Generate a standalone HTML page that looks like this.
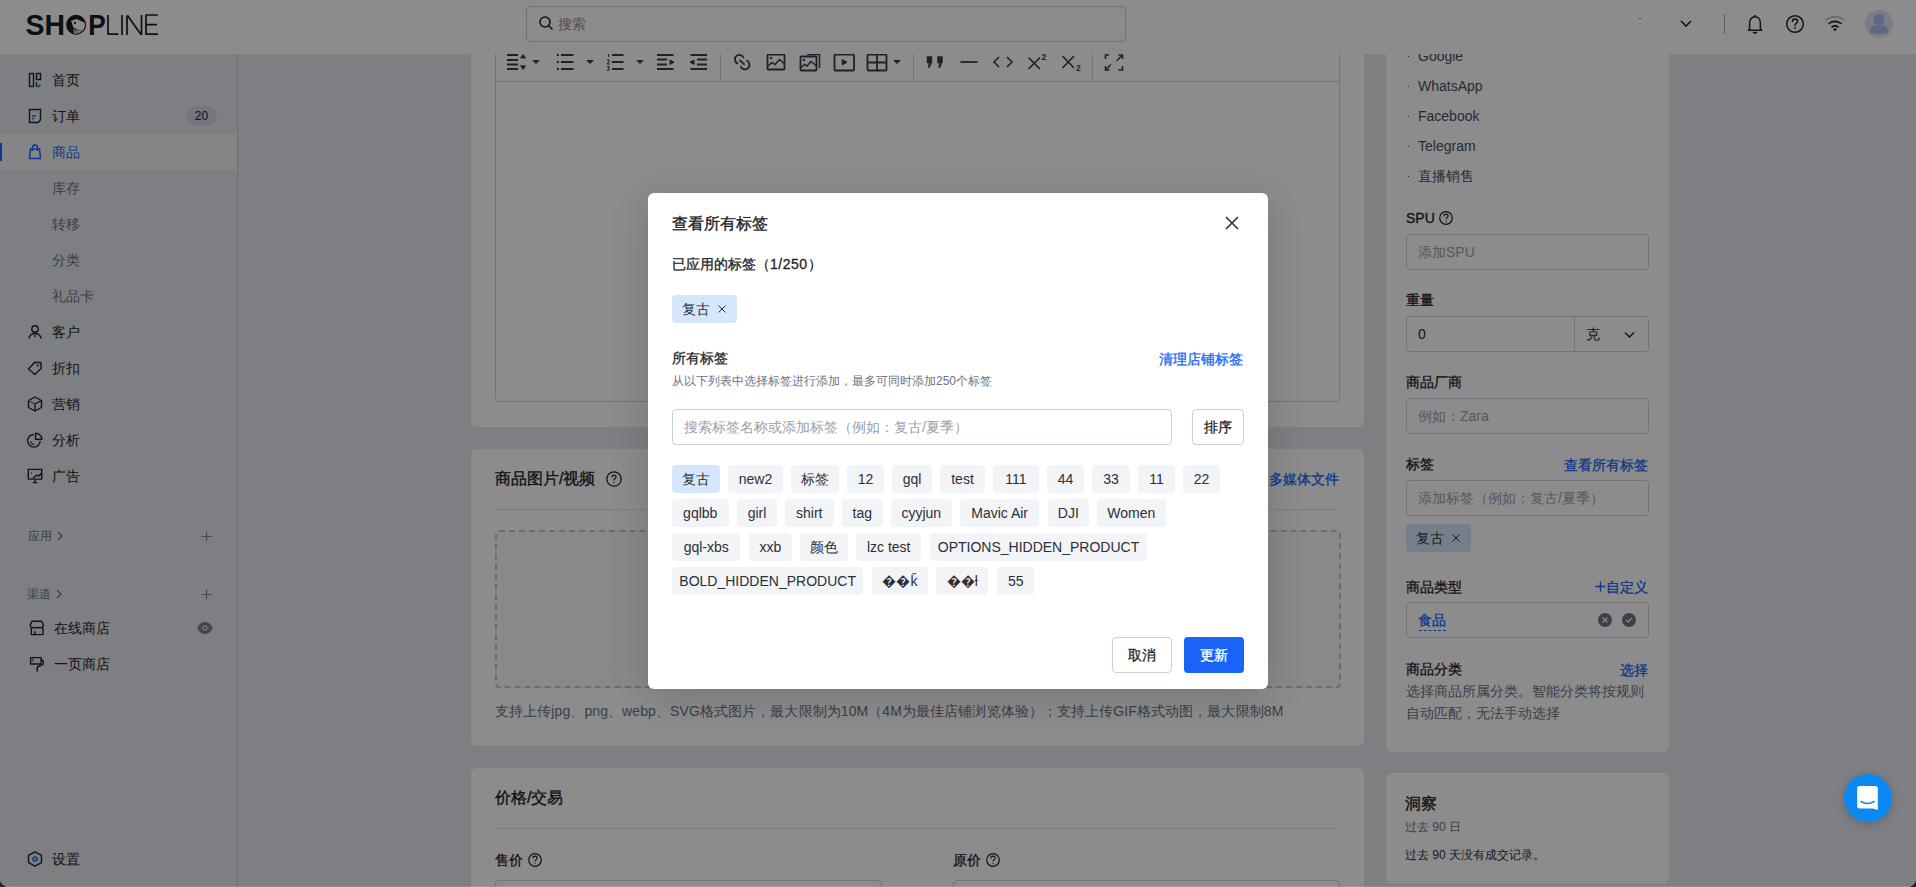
<!DOCTYPE html>
<html><head><meta charset="utf-8">
<style>
*{box-sizing:border-box;margin:0;padding:0}
html,body{width:1916px;height:887px;overflow:hidden}
body{font-family:"Liberation Sans",sans-serif;font-size:14px;color:#1f2329;background:#e6e8ee;position:relative}
.a{position:absolute;white-space:nowrap}
.t{position:absolute;white-space:nowrap;line-height:20px}
svg{position:absolute;overflow:visible}
#header{left:0;top:0;width:1916px;height:54px;background:#fff;z-index:5}
#side{left:0;top:54px;width:238px;height:833px;border-right:1px solid #c2c8d8}
.card{position:absolute;background:#fff;border-radius:6px}
.inp{position:absolute;border:1px solid #cfd3dc;border-radius:4px;background:#fff}
.ph{color:#9aa1ad}
.lbl{-webkit-text-stroke-width:0.3px}
.m{-webkit-text-stroke-width:0.3px}
.link{color:#1964f7;-webkit-text-stroke-width:0.3px}
#overlay{z-index:10;position:absolute;left:0;top:0;width:1916px;height:887px;background:rgba(0,0,0,0.45)}
#modal{z-index:11;position:absolute;left:648px;top:193px;width:620px;height:496px;background:#fff;border-radius:6px;box-shadow:0 8px 40px rgba(0,0,0,0.16)}
.chip{position:absolute;height:28px;line-height:28px;background:#f3f4f7;border-radius:4px;text-align:center;color:#2b2f36;font-size:14px}
.sel{background:#d6e7fd}
</style></head><body>

<!-- ============ HEADER ============ -->
<div id="header" class="a">
  <!-- logo -->
  <svg style="left:0;top:0" width="200" height="54">
    <text x="25.6" y="35" font-family="Liberation Sans" font-weight="bold" font-size="29.6" fill="#1a1d21" textLength="39.5" lengthAdjust="spacingAndGlyphs">SH</text>
    <defs><clipPath id="oc"><circle cx="76.1" cy="24.8" r="8.9"/></clipPath></defs>
    <circle cx="76.1" cy="24.8" r="10" fill="#1a1d21"/>
    <path clip-path="url(#oc)" d="M71.1 20.8 L76.5 19.1 L86.5 23.3 L87 37 L74 37 L73.5 27.9 Z" fill="#fff"/>
    <path clip-path="url(#oc)" d="M73.4 27.6 L76.8 34.5 M73.6 27.9 L84 32.5 M73.5 28 L80.5 35" stroke="#1a1d21" stroke-width="0.7"/>
    <rect x="74" y="22" width="1.9" height="1.9" fill="#1a1d21"/>
    <text x="88.2" y="35" font-family="Liberation Sans" font-weight="bold" font-size="29.6" fill="#1a1d21" textLength="17.5" lengthAdjust="spacingAndGlyphs">P</text>
    <g stroke="#1a1d21" stroke-width="1.7" fill="none" stroke-linejoin="bevel">
      <path d="M108 15 V34.2 H118.5"/>
      <path d="M122 15 V35"/>
      <path d="M127 35 V15.5 M127.4 15.2 L141.1 34.8 M141.5 35 V15"/>
      <path d="M157.8 15 H146 V34.2 H158 M146 24.6 H157"/>
    </g>
  </svg>
  <!-- search -->
  <div class="a" style="left:526px;top:6px;width:600px;height:36px;border:1px solid #c9ccd6;border-radius:4px;background:#fff"></div>
  <svg style="left:538px;top:15px" width="16" height="16"><circle cx="7" cy="7" r="5" stroke="#1f2329" stroke-width="1.6" fill="none"/><path d="M10.8 10.8 L14 14" stroke="#1f2329" stroke-width="1.6" stroke-linecap="round"/></svg>
  <div class="t ph" style="left:558px;top:14px;font-size:14px;color:#8c929c">搜索</div>
  <!-- right -->
  <div class="a" style="left:1639px;top:17.5px;width:1.5px;height:1.5px;background:#777"></div>
  <svg style="left:1680px;top:20px" width="12" height="8"><path d="M1 1 L6 6 L11 1" stroke="#1f2329" stroke-width="1.6" fill="none"/></svg>
  <div class="a" style="left:1724px;top:14px;width:1px;height:20px;background:#9ea5b5"></div>
  <svg style="left:1745px;top:13px" width="20" height="22"><path d="M4.6 15.8 V10.2 C4.6 6.4 6.8 3.8 10 3.8 C13.2 3.8 15.4 6.4 15.4 10.2 V15.8 L16.6 17.2 H3.4 Z" stroke="#1f2329" stroke-width="1.5" fill="none" stroke-linejoin="round"/><path d="M8 19 Q10 21 12 19" stroke="#1f2329" stroke-width="1.6" fill="none"/><path d="M10 2 V3.5" stroke="#1f2329" stroke-width="1.6"/></svg>
  <svg style="left:1785px;top:14px" width="20" height="20"><circle cx="10" cy="10" r="8.3" stroke="#1f2329" stroke-width="1.5" fill="none"/><path d="M7.4 7.6 C7.4 6 8.6 5 10 5 C11.5 5 12.6 6 12.6 7.4 C12.6 9.2 10 9.4 10 11.4" stroke="#1f2329" stroke-width="1.5" fill="none" stroke-linecap="round"/><circle cx="10" cy="14.2" r="0.9" fill="#1f2329"/></svg>
  <svg style="left:1824px;top:15px" width="22" height="18"><path d="M2 5 C7.5 0.5 14.5 0.5 20 5" stroke="#bfc4cc" stroke-width="1.6" fill="none" stroke-linecap="round"/><path d="M5 8.5 C8.5 5.7 13.5 5.7 17 8.5" stroke="#1f2329" stroke-width="1.6" fill="none" stroke-linecap="round"/><path d="M8 12 C9.8 10.6 12.2 10.6 14 12" stroke="#1f2329" stroke-width="1.6" fill="none" stroke-linecap="round"/><path d="M9.5 14 L11 15.8 L12.5 14 Z" fill="#1f2329" stroke="#1f2329" stroke-width="1"/></svg>
  <svg style="left:1865px;top:10px" width="28" height="28"><circle cx="14" cy="14" r="14" fill="#dde3f0"/><circle cx="14" cy="9.3" r="5.6" fill="#a9bff0"/><path d="M5 21.5 C5 17 8.5 15.2 14 15.2 C19.5 15.2 23 17 23 21.5 C23 23.4 20.5 23.8 14 23.8 C7.5 23.8 5 23.4 5 21.5 Z" fill="#a9bff0"/></svg>
</div>

<!-- ============ SIDEBAR ============ -->
<div id="side" class="a"></div>
<div class="a" style="left:0;top:134px;width:237px;height:36px;background:#f2f3f6"></div>
<div class="a" style="left:0;top:143px;width:2px;height:18px;background:#1964f7"></div>

<!-- icons -->
<svg style="left:27px;top:72px" width="16" height="16" fill="none" stroke="#1f2329" stroke-width="1.4">
  <rect x="2.5" y="1.5" width="4" height="13"/><rect x="9.5" y="1.5" width="4" height="6"/><path d="M9.5 14.5 H12 L13.5 12.5" stroke="#1964f7"/><path d="M9.5 10 V14.5"/>
</svg>
<svg style="left:27px;top:108px" width="16" height="16" fill="none" stroke="#1f2329" stroke-width="1.4">
  <path d="M2.5 1.5 H13.5 V12 L11 14.5 H2.5 Z"/><path d="M5 8 H9" stroke="#1964f7"/><path d="M5 10.5 H7" stroke="#1964f7"/>
</svg>
<svg style="left:27px;top:144px" width="16" height="16" fill="none" stroke="#1964f7" stroke-width="1.5">
  <path d="M2.5 14.5 L3.5 5 H12.5 L13.5 14.5 Z"/><path d="M5.5 7 V3.5 C5.5 2 6.5 1 8 1 C9.5 1 10.5 2 10.5 3.5 V7"/>
</svg>
<svg style="left:27px;top:324px" width="16" height="16" fill="none" stroke="#1f2329" stroke-width="1.4">
  <circle cx="8" cy="5" r="3.2"/><path d="M1.8 14.5 C2.5 11 5 9.5 8 9.5 C11 9.5 13.5 11 14.2 14.5"/><circle cx="8" cy="12" r="0.6" stroke="#1964f7" fill="#1964f7"/>
</svg>
<svg style="left:27px;top:360px" width="16" height="16" fill="none" stroke="#1f2329" stroke-width="1.4" stroke-linejoin="round">
  <path d="M1.5 9 L7.5 2.5 H14 V8.5 L8 14.5 Z"/><circle cx="10.8" cy="5.5" r="0.6" stroke="#1964f7" fill="#1964f7"/>
</svg>
<svg style="left:27px;top:396px" width="16" height="16" fill="none" stroke="#1f2329" stroke-width="1.4" stroke-linejoin="round">
  <path d="M8 1 L14.5 4.5 V11.5 L8 15 L1.5 11.5 V4.5 Z"/><path d="M8 8 L14.5 4.5 M8 8 V15"/><path d="M1.5 4.5 L8 8" stroke="#1964f7"/>
</svg>
<svg style="left:27px;top:432px" width="16" height="16" fill="none" stroke="#1f2329" stroke-width="1.4">
  <path d="M6.9 2.5 A6.3 6.3 0 1 0 13.2 8.8"/><path d="M8.6 1.2 V7.4 H14.8 A6.2 6.2 0 0 0 8.6 1.2 Z"/><path d="M3.6 9.2 A3.8 3.8 0 0 0 7.4 12.6" stroke="#1964f7" stroke-width="1.5"/>
</svg>
<svg style="left:27px;top:468px" width="16" height="16" fill="none" stroke="#1f2329" stroke-width="1.4" stroke-linejoin="round">
  <path d="M1.3 11.1 V1.4 H14.7 V11.1 Z"/><path d="M8 11.1 V14.6 M5.8 14.6 H10.2"/><path d="M5.8 10.2 L9.6 7.2 L11.8 8 L14.6 5"/><circle cx="4.3" cy="5" r="0.4" stroke="#1964f7" stroke-width="1" fill="#1964f7"/>
</svg>

<div class="t" style="left:52px;top:70px;color:#1f2329">首页</div>
<div class="t" style="left:52px;top:106px;color:#1f2329">订单</div>
<div class="a" style="left:186px;top:106px;width:31px;height:20px;border-radius:10px;background:#d2d8e7;color:#1f2329;font-size:12px;line-height:20px;text-align:center">20</div>
<div class="t" style="left:52px;top:142px;color:#1964f7">商品</div>
<div class="t" style="left:52px;top:178px;color:#6b7384">库存</div>
<div class="t" style="left:52px;top:214px;color:#6b7384">转移</div>
<div class="t" style="left:52px;top:250px;color:#6b7384">分类</div>
<div class="t" style="left:52px;top:286px;color:#6b7384">礼品卡</div>
<div class="t" style="left:52px;top:322px">客户</div>
<div class="t" style="left:52px;top:358px">折扣</div>
<div class="t" style="left:52px;top:394px">营销</div>
<div class="t" style="left:52px;top:430px">分析</div>
<div class="t" style="left:52px;top:466px">广告</div>

<div class="t" style="left:28px;top:526px;font-size:12px;color:#6b7384">应用</div>
<svg style="left:56px;top:531px" width="8" height="10"><path d="M2 1 L6 5 L2 9" stroke="#6b7384" stroke-width="1.3" fill="none"/></svg>
<svg style="left:201px;top:531px" width="11" height="11"><path d="M5.5 0.5 V10.5 M0.5 5.5 H10.5" stroke="#7d8596" stroke-width="1.2"/></svg>
<div class="t" style="left:27px;top:584px;font-size:12px;color:#6b7384">渠道</div>
<svg style="left:55px;top:589px" width="8" height="10"><path d="M2 1 L6 5 L2 9" stroke="#6b7384" stroke-width="1.3" fill="none"/></svg>
<svg style="left:201px;top:589px" width="11" height="11"><path d="M5.5 0.5 V10.5 M0.5 5.5 H10.5" stroke="#7d8596" stroke-width="1.2"/></svg>

<svg style="left:29px;top:620px" width="16" height="16" fill="none" stroke="#1f2329" stroke-width="1.4" stroke-linejoin="round">
  <path d="M2.8 1.2 H12.6 L14.6 5.5 L12.8 8 C11.5 7.3 10.5 7.3 9.5 8 C8.5 7.3 7.5 7.3 6.3 8 C5 7.3 4 7.3 2.4 8 L1.2 5.5 Z"/><path d="M2.3 8 V14.6 H14 V8"/><path d="M5.8 11.2 V14.6"/>
</svg>
<div class="t" style="left:54px;top:618px">在线商店</div>
<svg style="left:196px;top:620px" width="18" height="16"><path d="M1 8 C3.5 3.5 6 2 9 2 C12 2 14.5 3.5 17 8 C14.5 12.5 12 14 9 14 C6 14 3.5 12.5 1 8 Z" fill="#7a8293"/><circle cx="9" cy="8" r="2.6" fill="#e4e6ed"/><circle cx="9" cy="8" r="1.5" fill="#7a8293"/></svg>
<svg style="left:29px;top:656px" width="16" height="16" fill="none" stroke="#1f2329" stroke-width="1.4" stroke-linejoin="round">
  <path d="M1.6 1.6 H12 V8 H1.6 Z"/><path d="M12 3.5 C14.2 3.8 14.4 5 14.4 6.8 C14.4 9 13.3 9.4 10.5 9.8 C8.5 10.2 8.2 11 8.2 12.5 V15.4"/><path d="M3.8 2.8 V5.7" stroke="#1964f7" stroke-width="1.3"/>
</svg>
<div class="t" style="left:54px;top:654px">一页商店</div>

<svg style="left:27px;top:851px" width="16" height="16" fill="none" stroke="#1f2329" stroke-width="1.4" stroke-linejoin="round">
  <path d="M8 0.8 L14.5 4.4 V11.6 L8 15.2 L1.5 11.6 V4.4 Z"/><circle cx="8" cy="8" r="2" stroke="#1964f7" stroke-width="1.6"/>
</svg>
<div class="t" style="left:52px;top:849px">设置</div>

<!-- ============ MAIN CARDS ============ -->
<div class="card" style="left:471px;top:20px;width:893px;height:407px"></div>
<div class="a" style="left:495px;top:40px;width:845px;height:362px;border:1px solid #cfd3dc;border-radius:4px"></div>
<div class="a" style="left:496px;top:81px;width:843px;height:1px;background:#cfd3dc"></div>
<div class="a" style="left:720px;top:54px;width:1px;height:27px;background:#cfd3dc"></div>
<div class="a" style="left:913px;top:54px;width:1px;height:27px;background:#cfd3dc"></div>
<div class="a" style="left:1092px;top:54px;width:1px;height:27px;background:#cfd3dc"></div>

<svg style="left:0;top:0" width="1400" height="90" fill="none" stroke="#363d4b" stroke-width="1.8">
  <!-- line height -->
  <path d="M507 55 H518 M507 60 H518 M507 64.5 H518 M507 69 H518"/>
  <path d="M520.6 58 L523.1 54.4 L525.6 58 Z M520.6 65.7 L523.1 69.6 L525.6 65.7 Z" fill="#363d4b" stroke-width="0.8"/>
  <path d="M533 60.5 H539 L536 63.5 Z" fill="#363d4b" stroke-width="1"/>
  <!-- bullet list -->
  <path d="M561 55 H573.5 M561 62 H573.5 M561 69 H573.5"/>
  <path d="M556.8 55 H558.8 M556.8 62 H558.8 M556.8 69 H558.8" stroke-width="2.2"/>
  <path d="M587 60.5 H593 L590 63.5 Z" fill="#363d4b" stroke-width="1"/>
  <!-- ordered list -->
  <path d="M612 55 H623.5 M612 62 H623.5 M612 69 H623.5"/>
  <path d="M607 54 L608.5 53.5 V57 M607 60 Q609.5 59 609.5 61 L607 64 H610 M607 66.5 H609.5 L608 68 Q610 68.5 609.5 70 L607 70.5" stroke-width="1"/>
  <path d="M637 60.5 H643 L640 63.5 Z" fill="#363d4b" stroke-width="1"/>
  <!-- indent -->
  <path d="M657 55 H673.5 M657 59.5 H667 M657 64.5 H667 M657 69 H673.5"/>
  <path d="M670 60 L674 62.2 L670 64.4 Z" fill="#363d4b" stroke-width="1"/>
  <!-- outdent -->
  <path d="M690.5 55 H707 M697 59.5 H707 M697 64.5 H707 M690.5 69 H707"/>
  <path d="M694 60 L690 62.2 L694 64.4 Z" fill="#363d4b" stroke-width="1"/>
  <!-- link -->
  <path d="M743.4 57.3 A4.5 4.5 0 1 0 737.5 63.4" stroke-width="1.8" stroke-linecap="round"/>
  <path d="M747.1 60.7 A4.6 4.6 0 1 1 740.8 66.8" stroke-width="1.8" stroke-linecap="round"/>
  <path d="M739.9 60.4 L744 64.1" stroke-width="1.8" stroke-linecap="round"/>
  <!-- image -->
  <rect x="767.5" y="54.5" width="17" height="15" rx="1"/>
  <circle cx="771" cy="58" r="0.9" fill="#363d4b" stroke-width="0.8"/>
  <path d="M768 66 L772 62.5 L775 64.5 L779.5 59.5 L784 63.5" stroke-width="1.5"/>
  <!-- gallery -->
  <rect x="800.5" y="56.5" width="16" height="14" rx="1"/>
  <path d="M807 54.5 H819.5 V68" stroke-width="1.5"/>
  <circle cx="804" cy="60" r="0.9" fill="#363d4b" stroke-width="0.8"/>
  <path d="M801 67.5 L804.5 64.5 L807 66 L811 61.5 L816 65.5" stroke-width="1.5"/>
  <!-- video -->
  <rect x="834.5" y="54.5" width="19.5" height="16" rx="1"/>
  <path d="M842.2 59.5 L847 62.2 L842.2 64.9 Z" fill="#363d4b" stroke-width="1"/>
  <!-- table -->
  <rect x="867.5" y="54.5" width="19" height="16" rx="1"/>
  <path d="M877 54.5 V70.5 M867.5 62.5 H886.5"/>
  <path d="M894 60.5 H900 L897 63.5 Z" fill="#363d4b" stroke-width="1"/>
  <!-- quote -->
  <path d="M927 56.5 H932 V62 L929.5 67.5 H928 L929 63 H927 Z M937.5 56.5 H942.5 V62 L940 67.5 H938.5 L939.5 63 H937.5 Z" fill="#363d4b" stroke-width="0.5"/>
  <!-- hr -->
  <path d="M960.5 62 H977.5" stroke-width="1.8"/>
  <!-- code -->
  <path d="M999 57 L994 62 L999 67 M1007 57 L1012 62 L1007 67" stroke-width="1.6"/>
  <!-- sup -->
  <path d="M1028.5 57.5 L1040 69 M1040 57.5 L1028.5 69" stroke-width="1.6"/>
  <text x="1041.6" y="60.3" font-size="8.5" font-weight="bold" font-family="Liberation Sans" fill="#363d4b" stroke="none">2</text>
  <!-- sub -->
  <path d="M1062.5 56 L1074 68 M1074 56 L1062.5 68" stroke-width="1.6"/>
  <text x="1076" y="70.6" font-size="8.5" font-weight="bold" font-family="Liberation Sans" fill="#363d4b" stroke="none">2</text>
  <!-- fullscreen -->
  <path d="M1105.5 59 V55 H1109 M1118.5 55 H1122.5 V59 M1105.5 66 V70 H1109.5 M1122.5 66 V70 H1118.5" stroke-width="1.6"/>
  <path d="M1116.5 61 L1122 55.5 M1111 64.5 L1106 69.5" stroke-width="1.4"/>
</svg>

<div class="card" style="left:471px;top:449px;width:893px;height:297px"></div>
<div class="t" style="left:495px;top:469px;font-size:16px;-webkit-text-stroke-width:0.35px;color:#1f2329">商品图片/视频</div>
<svg style="left:606px;top:471px" width="16" height="16"><circle cx="8" cy="8" r="7.2" stroke="#1f2329" stroke-width="1.3" fill="none"/><path d="M6 6.3 C6 5 6.9 4.2 8 4.2 C9.2 4.2 10 5 10 6.1 C10 7.5 8 7.7 8 9.4" stroke="#1f2329" stroke-width="1.2" fill="none"/><circle cx="8" cy="11.5" r="0.7" fill="#1f2329"/></svg>
<div class="t link" style="right:577px;top:469px">从URL添加多媒体文件</div>
<div class="a" style="left:495px;top:509px;width:845px;height:1px;background:#e3e6ec"></div>
<div class="a" style="left:495px;top:530px;width:846px;height:158px;border:2px dashed #bec5d6;border-radius:4px;background:#f8f9fb"></div>
<div class="t" style="left:495px;top:701px;color:#6b7384;letter-spacing:0.09px">支持上传jpg、png、webp、SVG格式图片，最大限制为10M（4M为最佳店铺浏览体验）；支持上传GIF格式动图，最大限制8M</div>

<div class="card" style="left:471px;top:768px;width:893px;height:140px"></div>
<div class="t" style="left:495px;top:788px;font-size:16px;-webkit-text-stroke-width:0.35px">价格/交易</div>
<div class="a" style="left:495px;top:828px;width:845px;height:1px;background:#e3e6ec"></div>
<div class="t lbl" style="left:495px;top:850px">售价</div>
<svg style="left:528px;top:853px" width="14" height="14"><circle cx="7" cy="7" r="6.3" stroke="#1f2329" stroke-width="1.2" fill="none"/><path d="M4.9 5.3 C4.9 3.9 5.8 3.1 7 3.1 C8.3 3.1 9.1 3.9 9.1 5 C9.1 6.6 7 6.7 7 8.6" stroke="#1f2329" stroke-width="1.15" fill="none"/><circle cx="7" cy="10.6" r="0.7" fill="#1f2329"/></svg>
<div class="inp" style="left:495px;top:880px;width:387px;height:36px"></div>
<div class="t lbl" style="left:953px;top:850px">原价</div>
<svg style="left:986px;top:853px" width="14" height="14"><circle cx="7" cy="7" r="6.3" stroke="#1f2329" stroke-width="1.2" fill="none"/><path d="M4.9 5.3 C4.9 3.9 5.8 3.1 7 3.1 C8.3 3.1 9.1 3.9 9.1 5 C9.1 6.6 7 6.7 7 8.6" stroke="#1f2329" stroke-width="1.15" fill="none"/><circle cx="7" cy="10.6" r="0.7" fill="#1f2329"/></svg>
<div class="inp" style="left:953px;top:880px;width:387px;height:36px"></div>

<!-- ============ RIGHT COLUMN ============ -->
<div class="card" style="left:1386px;top:20px;width:283px;height:732px"></div>
<div class="a" style="left:1407.5px;top:55.5px;width:1.8px;height:1.8px;background:#3f4654"></div>
<div class="t" style="left:1418px;top:46px;color:#474f5e">Google</div>
<div class="a" style="left:1407.5px;top:85.5px;width:1.8px;height:1.8px;background:#3f4654"></div>
<div class="t" style="left:1418px;top:76px;color:#474f5e">WhatsApp</div>
<div class="a" style="left:1407.5px;top:115.5px;width:1.8px;height:1.8px;background:#3f4654"></div>
<div class="t" style="left:1418px;top:106px;color:#474f5e">Facebook</div>
<div class="a" style="left:1407.5px;top:145.5px;width:1.8px;height:1.8px;background:#3f4654"></div>
<div class="t" style="left:1418px;top:136px;color:#474f5e">Telegram</div>
<div class="a" style="left:1407.5px;top:175.5px;width:1.8px;height:1.8px;background:#3f4654"></div>
<div class="t" style="left:1418px;top:166px;color:#474f5e">直播销售</div>

<div class="t lbl" style="left:1406px;top:208px">SPU</div>
<svg style="left:1439px;top:211px" width="14" height="14"><circle cx="7" cy="7" r="6.3" stroke="#1f2329" stroke-width="1.2" fill="none"/><path d="M4.9 5.3 C4.9 3.9 5.8 3.1 7 3.1 C8.3 3.1 9.1 3.9 9.1 5 C9.1 6.6 7 6.7 7 8.6" stroke="#1f2329" stroke-width="1.15" fill="none"/><circle cx="7" cy="10.6" r="0.7" fill="#1f2329"/></svg>
<div class="inp" style="left:1406px;top:234px;width:243px;height:36px"></div>
<div class="t ph" style="left:1418px;top:242px">添加SPU</div>

<div class="t lbl" style="left:1406px;top:290px">重量</div>
<div class="inp" style="left:1406px;top:316px;width:243px;height:36px"></div>
<div class="a" style="left:1574px;top:317px;width:1px;height:34px;background:#cfd3dc"></div>
<div class="t" style="left:1418px;top:324px">0</div>
<div class="t" style="left:1586px;top:324px">克</div>
<svg style="left:1624px;top:331px" width="11" height="8"><path d="M1 1.5 L5.5 6 L10 1.5" stroke="#1f2329" stroke-width="1.4" fill="none"/></svg>

<div class="t lbl" style="left:1406px;top:372px">商品厂商</div>
<div class="inp" style="left:1406px;top:398px;width:243px;height:36px"></div>
<div class="t ph" style="left:1418px;top:406px">例如：Zara</div>

<div class="t lbl" style="left:1406px;top:454px">标签</div>
<div class="t link" style="left:1564px;top:455px">查看所有标签</div>
<div class="inp" style="left:1406px;top:480px;width:243px;height:36px"></div>
<div class="t ph" style="left:1418px;top:488px">添加标签（例如：复古/夏季）</div>
<div class="a" style="left:1406px;top:524px;width:65px;height:28px;border-radius:4px;background:#d6e7fd"></div>
<div class="t" style="left:1416px;top:528px;color:#2b2f36">复古</div>
<svg style="left:1451px;top:533px" width="10" height="10"><path d="M1.5 1.5 L8.5 8.5 M8.5 1.5 L1.5 8.5" stroke="#2b2f36" stroke-width="1"/></svg>

<div class="t lbl" style="left:1406px;top:577px">商品类型</div>
<svg style="left:1595px;top:581px" width="11" height="11"><path d="M5.5 0.5 V10.5 M0.5 5.5 H10.5" stroke="#1964f7" stroke-width="1.4"/></svg><div class="t link" style="left:1606px;top:577px">自定义</div>
<div class="inp" style="left:1406px;top:602px;width:243px;height:36px"></div>
<div class="t link" style="left:1418px;top:610px">食品</div>
<div class="a" style="left:1419px;top:630px;width:27px;height:0;border-top:1px dashed #1964f7"></div>
<svg style="left:1597px;top:612px" width="40" height="16"><circle cx="8" cy="8" r="7" fill="#6e7687"/><path d="M5.5 5.5 L10.5 10.5 M10.5 5.5 L5.5 10.5" stroke="#fff" stroke-width="1.2"/><circle cx="32" cy="8" r="7" fill="#6e7687"/><path d="M29 8 L31.2 10 L35 6" stroke="#fff" stroke-width="1.2" fill="none"/></svg>

<div class="t lbl" style="left:1406px;top:659px">商品分类</div>
<div class="t link" style="left:1620px;top:660px">选择</div>
<div class="a" style="left:1406px;top:680px;width:244px;white-space:normal;line-height:22px;color:#6b7384">选择商品所属分类。智能分类将按规则自动匹配，无法手动选择</div>

<div class="card" style="left:1386px;top:773px;width:283px;height:111px"></div>
<div class="t" style="left:1405px;top:794px;font-size:16px;-webkit-text-stroke-width:0.35px">洞察</div>
<div class="t" style="left:1405px;top:817px;font-size:12px;color:#6b7384">过去 90 日</div>
<div class="t" style="left:1405px;top:845px;font-size:12px;color:#2b2f36">过去 90 天没有成交记录。</div>

<!-- ============ OVERLAY ============ -->
<div id="overlay"></div>

<!-- ============ MODAL ============ -->
<div id="modal">
  <div class="t m" style="left:24px;top:21px;font-size:16px;-webkit-text-stroke-width:0.35px;color:#1f2329">查看所有标签</div>
  <svg style="left:577px;top:23px" width="14" height="14"><path d="M1 1 L13 13 M13 1 L1 13" stroke="#2b2f36" stroke-width="1.6"/></svg>
  <div class="t m" style="left:24px;top:61px;color:#1f2329">已应用的标签（<span style="letter-spacing:0.5px">1/250</span>）</div>
  <div class="a sel" style="left:24px;top:102px;width:65px;height:28px;border-radius:4px"></div>
  <div class="t" style="left:34px;top:106px;color:#2b2f36">复古</div>
  <svg style="left:69px;top:111px" width="10" height="10"><path d="M1.5 1.5 L8.5 8.5 M8.5 1.5 L1.5 8.5" stroke="#2b2f36" stroke-width="1"/></svg>

  <div class="t m" style="left:24px;top:155px;color:#1f2329">所有标签</div>
  <div class="t link" style="left:511px;top:156px">清理店铺标签</div>
  <div class="t" style="left:24px;top:178px;font-size:12px;color:#6b7384">从以下列表中选择标签进行添加，最多可同时添加250个标签</div>

  <div class="a" style="left:24px;top:216px;width:500px;height:36px;border:1px solid #c9cfe0;border-radius:4px"></div>
  <div class="t ph" style="left:36px;top:224px">搜索标签名称或添加标签（例如：复古/夏季）</div>
  <div class="a" style="left:544px;top:216px;width:52px;height:36px;border:1px solid #c9cfe0;border-radius:4px;text-align:center;line-height:34px;color:#1f2329;-webkit-text-stroke-width:0.3px">排序</div>

  <!-- chips row 1 -->
  <div class="chip sel" style="left:24px;top:272px;width:48px">复古</div>
  <div class="chip" style="left:80px;top:272px;width:55px">new2</div>
  <div class="chip" style="left:143px;top:272px;width:48px">标签</div>
  <div class="chip" style="left:199px;top:272px;width:37px">12</div>
  <div class="chip" style="left:244px;top:272px;width:40px">gql</div>
  <div class="chip" style="left:292px;top:272px;width:45px">test</div>
  <div class="chip" style="left:345px;top:272px;width:46px">111</div>
  <div class="chip" style="left:399px;top:272px;width:37px">44</div>
  <div class="chip" style="left:444px;top:272px;width:38px">33</div>
  <div class="chip" style="left:490px;top:272px;width:37px">11</div>
  <div class="chip" style="left:535px;top:272px;width:37px">22</div>
  <!-- row 2 -->
  <div class="chip" style="left:24px;top:306px;width:56.5px">gqlbb</div>
  <div class="chip" style="left:89px;top:306px;width:40px">girl</div>
  <div class="chip" style="left:137px;top:306px;width:48.5px">shirt</div>
  <div class="chip" style="left:194px;top:306px;width:40.6px">tag</div>
  <div class="chip" style="left:243px;top:306px;width:60.5px">cyyjun</div>
  <div class="chip" style="left:312px;top:306px;width:79.3px">Mavic Air</div>
  <div class="chip" style="left:400px;top:306px;width:40.6px">DJI</div>
  <div class="chip" style="left:449px;top:306px;width:68.6px">Women</div>
  <!-- row 3 -->
  <div class="chip" style="left:24px;top:340px;width:68.4px">gql-xbs</div>
  <div class="chip" style="left:101px;top:340px;width:42.6px">xxb</div>
  <div class="chip" style="left:152px;top:340px;width:47.9px">颜色</div>
  <div class="chip" style="left:208px;top:340px;width:65.4px">lzc test</div>
  <div class="chip" style="left:282px;top:340px;width:217px">OPTIONS_HIDDEN_PRODUCT</div>
  <!-- row 4 -->
  <div class="chip" style="left:24px;top:374px;width:191.3px">BOLD_HIDDEN_PRODUCT</div>
  <div class="chip" style="left:224px;top:374px;width:55.8px">��ǩ</div>
  <div class="chip" style="left:288px;top:374px;width:52.4px">��ƚ</div>
  <div class="chip" style="left:349px;top:374px;width:37.4px">55</div>

  <div class="a" style="left:464px;top:444px;width:60px;height:36px;border:1px solid #c9cfe0;border-radius:4px;text-align:center;line-height:34px;color:#1f2329;-webkit-text-stroke-width:0.3px">取消</div>
  <div class="a" style="left:536px;top:444px;width:60px;height:36px;border-radius:4px;background:#1964f7;text-align:center;line-height:36px;color:#fff;-webkit-text-stroke-width:0.3px">更新</div>
</div>

<!-- window corners -->
<div class="a" style="z-index:20;left:0;top:886px;width:1916px;height:1px;background:rgba(255,255,255,0.12)"></div>
<svg style="z-index:21;left:0;top:877px" width="10" height="10"><path d="M0 1 A9 9 0 0 0 9 10 H0 Z" fill="#22261c"/><path d="M0 1 A9 9 0 0 0 9 10" stroke="rgba(255,255,255,0.35)" stroke-width="0.8" fill="none"/></svg>
<svg style="z-index:21;left:1906px;top:877px" width="10" height="10"><path d="M10 1 A9 9 0 0 1 1 10 H10 Z" fill="#22261c"/><path d="M10 1 A9 9 0 0 1 1 10" stroke="rgba(255,255,255,0.35)" stroke-width="0.8" fill="none"/></svg>
<!-- chat -->
<div class="a" style="z-index:12;left:1844px;top:774px;width:48px;height:48px;border-radius:50%;background:#0b89f2;box-shadow:0 2px 10px rgba(0,0,0,0.2)"></div>
<svg style="z-index:12;left:1856px;top:785px" width="24" height="26"><path d="M3.5 1 H19.5 C20.8 1 21.8 2 21.8 3.2 V25 L17 23.5 H3.5 C2.2 23.5 1.2 22.5 1.2 21.2 V3.2 C1.2 2 2.2 1 3.5 1 Z" fill="#fff"/><path d="M5 16.5 Q11.5 20.5 18 16.5" stroke="#0b89f2" stroke-width="1.6" fill="none" stroke-linecap="round"/></svg>

</body></html>
